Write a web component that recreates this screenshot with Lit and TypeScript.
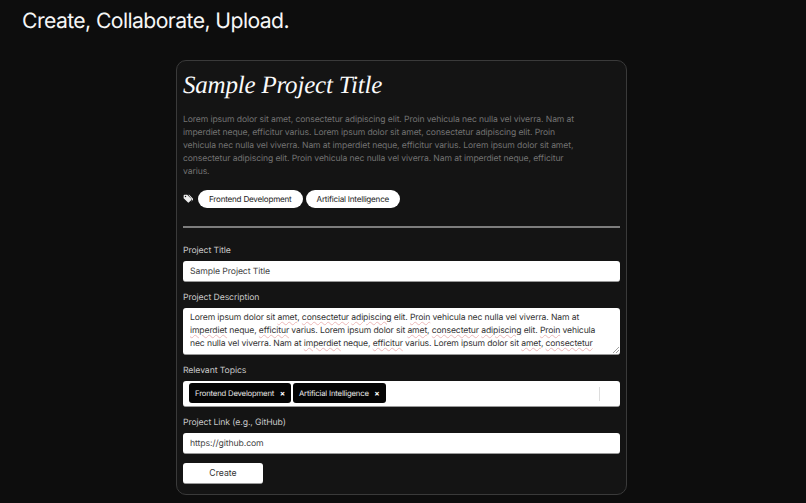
import { LitElement, html, css } from "lit";
import { customElement } from "lit/decorators.js";

const LOREM = "Lorem ipsum dolor sit amet, consectetur adipiscing elit. Proin vehicula nec nulla vel viverra. Nam at imperdiet neque, efficitur varius.";
const TOPICS = ["Frontend Development", "Artificial Intelligence"];

@customElement("app-root")
export class AppRoot extends LitElement {
  static styles = css`
    :host { display: block; height: 503px; overflow: hidden; background: #0d0d0d; color: #fff; font-family: Inter, "Liberation Sans", sans-serif; text-rendering: geometricPrecision; }
    * { box-sizing: border-box; }
    h1 { margin: 0; padding: 9px 0 0 22px; font-size: 21.2px; line-height: 25px; font-weight: 400; color: #f6f6f6; letter-spacing: -0.59px; }
    .card { width: 451px; height: 435px; margin: 26px 0 0 176px; padding: 10px 6px 0; background: #141414; border: 1.5px solid #3a3a3a; border-radius: 10px; display: flex; flex-direction: column; }
    h2 { margin: 0; font-family: "Liberation Serif", serif; font-style: italic; font-weight: 400; font-size: 25px; line-height: 30px; color: #fafafa; letter-spacing: -0.2px; }
    .intro { margin: 12.5px 0 0; width: 400px; font-size: 8.6px; letter-spacing: -0.1px; line-height: 13px; color: #727272; }
    .tags { display: flex; align-items: center; gap: 3px; margin-top: 11px; }
    .tags svg { width: 10px; height: 10px; margin: 1px 2px 0 0; }
    .pill { height: 18px; padding: 0 11px; display: flex; align-items: center; background: #fff; color: #222; border-radius: 9px; font-size: 8.1px; letter-spacing: -0.22px; }
    hr { width: 100%; height: 2px; margin: 18px 0 0; border: 0; background: #7d7d7d; flex: none; }
    label { display: block; font-size: 8.7px; letter-spacing: -0.1px; line-height: 12px; color: #c8c8c8; }
    .f1 { margin-top: 17px; }
    .f { margin-top: 10px; }
    .box { margin-top: 4px; width: 100%; background: #fff; border-radius: 3px; font-size: 8.7px; letter-spacing: -0.1px; color: #444; border-bottom: 1px solid #999; }
    .input { height: 21px; padding: 2px 7px 0; display: flex; align-items: center; }
    .ta { position: relative; height: 47px; overflow: hidden; padding: 4.5px 7px; line-height: 13px; color: #333; font-size: 8.6px; letter-spacing: -0.12px; }
    .ta div { white-space: nowrap; }
    .ta u { text-decoration: underline wavy #ecb8b8 0.6px; text-underline-offset: 1px; }
    .grip { position: absolute; right: 1px; bottom: 1px; width: 6px; height: 6px; }
    .multi { height: 26px; padding: 0 0 0 6px; display: flex; align-items: center; gap: 2px; position: relative; }
    .chip { height: 20px; padding: 0 6px; display: flex; align-items: center; gap: 5.5px; background: #050505; color: #e8e8e8; border-radius: 3px; font-size: 7.7px; letter-spacing: -0.17px; }
    .chip b { font-size: 8px; font-weight: 700; color: #fff; line-height: 1; }
    .sep { position: absolute; right: 20px; top: 6px; width: 1px; height: 14px; background: #ddd; }
    button { margin-top: 9px; width: 80px; height: 21px; border: 0; border-bottom: 1px solid #999; border-radius: 3px; background: #fff; color: #333; font: 400 8.7px Inter, "Liberation Sans", sans-serif; }
  `;

  render() {
    const tick = (s: string) => html`<u>${s}</u>`;
    return html`
      <h1>Create, Collaborate, Upload.</h1>
      <section class="card">
        <h2>Sample Project Title</h2>
        <p class="intro">${LOREM} ${LOREM} ${LOREM}</p>
        <div class="tags">
          <svg viewBox="0 0 16 16" aria-hidden="true"><path fill="#eee" d="M1 2.500A1.500 1.500 0 0 1 2.500 1h4.200l6.600 6.600a1.400 1.400 0 0 1 0 2l-3.700 3.700a1.400 1.400 0 0 1-2 0L1 6.700V2.500zM4 5.200a1.200 1.200 0 1 0 0-2.400 1.200 1.200 0 0 0 0 2.400z"/><path fill="#eee" d="M8.600 1h1.300l5.500 5.600a2.400 2.400 0 0 1 0 3.300l-2.700 2.800 1-1.400a2.300 2.300 0 0 0 0-3.300z"/></svg>
          ${TOPICS.map((t) => html`<span class="pill">${t}</span>`)}
        </div>
        <hr />
        <div class="f1"><label>Project Title</label><div class="box input">Sample Project Title</div></div>
        <div class="f">
          <label>Project Description</label>
          <div class="box ta">
            <div>Lorem ipsum dolor sit ${tick("amet")}, ${tick("consectetur")} ${tick("adipiscing")} elit. ${tick("Proin")} vehicula nec nulla vel viverra. Nam at</div>
            <div>${tick("imperdiet")} neque, ${tick("efficitur")} varius. Lorem ipsum dolor sit ${tick("amet")}, ${tick("consectetur")} ${tick("adipiscing")} elit. ${tick("Proin")} vehicula</div>
            <div>nec nulla vel viverra. Nam at ${tick("imperdiet")} neque, ${tick("efficitur")} varius. Lorem ipsum dolor sit ${tick("amet")}, ${tick("consectetur")}</div>
            <svg class="grip" viewBox="0 0 6 6" aria-hidden="true"><path d="M0 6 6 0M3 6l3-3" stroke="#777" stroke-width=".7"/></svg>
          </div>
        </div>
        <div class="f">
          <label>Relevant Topics</label>
          <div class="box multi">
            ${TOPICS.map((t) => html`<span class="chip">${t}<b>×</b></span>`)}
            <span class="sep"></span>
          </div>
        </div>
        <div class="f"><label>Project Link (e.g., GitHub)</label><div class="box input">https://github.com</div></div>
        <button>Create</button>
      </section>
    `;
  }
}
